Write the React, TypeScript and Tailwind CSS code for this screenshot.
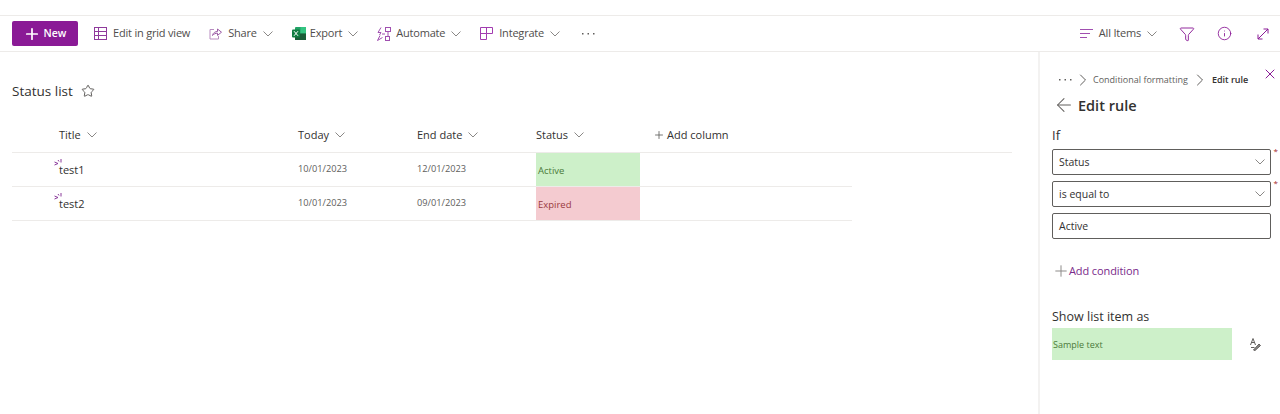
import { Plus, X, ArrowLeft, ChevronRight, Star, Filter, Info } from 'lucide-react';

function Chevron({ className = 'ml-[6px]' }: { className?: string }) {
  return (
    <svg width="10" height="6" viewBox="0 0 10 6" fill="none" stroke="#8a8886" strokeWidth="1" className={className}>
      <path d="M0.5 0.5 L5 5 L9.5 0.5" />
    </svg>
  );
}

function Dots({ color = '#605e5c' }: { color?: string }) {
  return (
    <svg width="13" height="2" viewBox="0 0 13 2" fill={color}>
      <rect x="0" y="0" width="1.5" height="1.5" />
      <rect x="5.5" y="0" width="1.5" height="1.5" />
      <rect x="11" y="0" width="1.5" height="1.5" />
    </svg>
  );
}

function GridIcon() {
  return (
    <svg width="13" height="13" viewBox="0 0 13 13" fill="none" stroke="#8f3a9c" strokeWidth="1">
      <rect x="0.5" y="0.5" width="12" height="12" />
      <path d="M0.5 4.5 H12.5 M0.5 8.5 H12.5 M4.5 0.5 V12.5" />
    </svg>
  );
}

function ShareIcon() {
  return (
    <svg width="13" height="13" viewBox="0 0 13 13" fill="none" stroke="#9a5aa5" strokeWidth="1">
      <path d="M5 2.5 H1 V12 H9.5 V9" stroke="#b88cc0" />
      <path d="M3.5 8.5 C4 5.5 6.5 4.5 8.5 4.5 V2 L12.5 5.2 L8.5 8.4 V6.2 C6.5 6.2 5 6.8 3.5 8.5 Z" />
    </svg>
  );
}

function ExcelIcon() {
  return (
    <svg width="14" height="13" viewBox="0 0 14 13">
      <rect x="3" y="0" width="11" height="13" rx="1" fill="#21a366" />
      <rect x="8.5" y="0" width="5.5" height="6.5" fill="#33c481" />
      <rect x="3" y="6.5" width="11" height="6.5" fill="#185c37" />
      <rect x="0" y="2.5" width="8" height="8" rx="1" fill="#107c41" />
      <path d="M2 4.2 L6 8.8 M6 4.2 L2 8.8" stroke="#ffffff" strokeWidth="1" />
    </svg>
  );
}

function AutomateIcon() {
  return (
    <svg width="14" height="14" viewBox="0 0 14 14" fill="none" stroke="#a04fb0" strokeWidth="1">
      <rect x="8.5" y="0.5" width="5" height="4" />
      <rect x="8.5" y="9.5" width="4" height="4" />
      <path d="M11 4.5 V9.5 M8 7 H5" />
      <path d="M4 0.5 L1 5.5 H4 L2.5 8 M3 8.5 L0.5 13.5 L5.5 10.5" />
    </svg>
  );
}

function IntegrateIcon() {
  return (
    <svg width="13" height="13" viewBox="0 0 13 13" fill="none" stroke="#a23bb0" strokeWidth="1">
      <path d="M0.5 0.5 H12.5 V6.5 H6.5 V12.5 H0.5 Z M0.5 6.5 H6.5 V0.5" />
    </svg>
  );
}

function ToolItem({ icon, label, chevron = true, textClass = 'ml-[6px]' }: { icon: React.ReactNode; label: string; chevron?: boolean; textClass?: string }) {
  return (
    <div className="flex items-center">
      {icon}
      <span className={`${textClass} text-[11px] tracking-[-0.2px] text-[#4f4d4b]`}>{label}</span>
      {chevron && <Chevron />}
    </div>
  );
}

function Header({ label, width }: { label: string; width: string }) {
  return (
    <div className={`flex items-center ${width}`}>
      <span className="text-[11px] font-medium text-[#323130]">{label}</span>
      <Chevron className="ml-[6px]" />
    </div>
  );
}

function Row({ title, today, end, status, cellClass }: { title: string; today: string; end: string; status: string; cellClass: string }) {
  return (
    <div className="flex h-[34px] w-[840px] items-stretch border-b border-[#edebe9]">
      <div className="relative flex w-[286px] items-center pl-[47px] text-[11px] text-[#323130]">
        <svg width="9" height="7" viewBox="0 0 9 7" fill="none" stroke="#8a3a9a" strokeWidth="1" className="absolute left-[42px] top-[6px]">
          <path d="M0.5 3 L4 4.5 L0.5 6 M7 0 V3.5 M4 1 L5 2.5" />
        </svg>
        <span className="mt-[1px]">{title}</span>
      </div>
      <div className="flex w-[119px] items-center pb-[2px] text-[9.25px] text-[#605e5c]">{today}</div>
      <div className="flex w-[119px] items-center pb-[2px] text-[9.25px] text-[#605e5c]">{end}</div>
      <div className={`flex w-[104px] items-center pl-[2px] pt-[2px] text-[9.5px] ${cellClass}`}>{status}</div>
    </div>
  );
}

function SelectBox({ label, required }: { label: string; required?: boolean }) {
  return (
    <div className="relative flex h-[26px] w-[219px] items-center justify-between rounded-[2px] border border-[#605e5c] pl-[6px] pr-[5px] text-[10.5px] text-[#323130]">
      <span className="pt-[1px]">{label}</span>
      <Chevron className="" />
      {required && <span className="absolute right-[-8px] top-[-5px] text-[8px] text-[#a4262c]">*</span>}
    </div>
  );
}

export default function App() {
  return (
    <div className="flex h-[414px] w-[1280px] flex-col overflow-hidden bg-white font-['Open_Sans',sans-serif]">
      <div className="h-[16px] border-b border-[#edebe9]" />
      <div className="flex h-[36px] items-center justify-between border-b border-[#edebe9] pl-[12px] pr-[11px]">
        <div className="flex items-center gap-[19px]">
          <div className="mr-[-3px] flex h-[25px] w-[66px] items-center justify-center rounded-[2px] bg-[#8a1a96] pr-[1px] text-[10.5px] font-semibold text-white">
            <Plus size={18} strokeWidth={2.3} className="mr-[3px]" />
            New
          </div>
          <ToolItem icon={<GridIcon />} label="Edit in grid view" chevron={false} />
          <ToolItem icon={<ShareIcon />} label="Share" />
          <ToolItem icon={<ExcelIcon />} label="Export" textClass="ml-[4px]" />
          <ToolItem icon={<AutomateIcon />} label="Automate" textClass="ml-[5px]" />
          <ToolItem icon={<IntegrateIcon />} label="Integrate" />
          <span className="ml-[3px]">
            <Dots />
          </span>
        </div>
        <div className="flex items-center">
          <div className="flex items-center">
            <svg width="13" height="9" viewBox="0 0 13 9" stroke="#a04fb0" strokeWidth="1">
              <path d="M0 0.5 H13 M0 4.5 H10 M0 8.5 H7" />
            </svg>
            <span className="ml-[6px] text-[11px] tracking-[-0.2px] text-[#4f4d4b]">All Items</span>
            <Chevron className="ml-[6px]" />
          </div>
          <Filter size={16} strokeWidth={1.4} color="#8a1a96" className="ml-[22px]" />
          <Info size={15} strokeWidth={1.4} color="#8a1a96" className="ml-[22px]" />
          <svg width="12" height="12" viewBox="0 0 12 12" fill="none" stroke="#8a1a96" strokeWidth="1" className="ml-[25px]">
            <path d="M1 11 L11 1 M6.5 1 H11 V5.5 M1 6.5 V11 H5.5" />
          </svg>
        </div>
      </div>

      <div className="flex flex-1">
        <div className="w-[1038px] pl-[12px]">
          <div className="mt-[29px] flex items-center">
            <span className="text-[13.5px] font-medium text-[#323130]">Status list</span>
            <Star size={14} strokeWidth={1.7} color="#605e5c" className="ml-[8px]" />
          </div>
          <div className="mt-[17px] flex h-[35px] w-[1000px] items-center border-b border-[#edebe9] pl-[47px]">
            <Header label="Title" width="w-[239px]" />
            <Header label="Today" width="w-[119px]" />
            <Header label="End date" width="w-[119px]" />
            <Header label="Status" width="w-[119px]" />
            <div className="flex items-center text-[11px] font-medium text-[#323130]">
              <Plus size={12} strokeWidth={1.7} color="#605e5c" className="mr-[2px] ml-[-2px]" />
              Add column
            </div>
          </div>
          <Row title="test1" today="10/01/2023" end="12/01/2023" status="Active" cellClass="bg-[#cdf0c9] text-[#4b7a3a]" />
          <Row title="test2" today="10/01/2023" end="09/01/2023" status="Expired" cellClass="bg-[#f4cbd0] text-[#9a3a3f]" />
        </div>

        <div className="relative flex-1 border-l-2 border-[#f3f2f1] pl-[12px]">
          <X size={16} strokeWidth={1.5} color="#8a1a96" className="absolute right-[2px] top-[14px]" />
          <div className="mt-[20px] flex h-[16px] items-center pl-[7px] text-[9px] text-[#605e5c]">
            <Dots />
            <ChevronRight size={20} strokeWidth={1.2} className="ml-[1px]" />
            <span>Conditional formatting</span>
            <ChevronRight size={20} strokeWidth={1.2} className="mx-[2px]" />
            <span className="font-semibold text-[#323130]">Edit rule</span>
          </div>
          <div className="mt-[6px] flex h-[22px] items-center">
            <ArrowLeft size={22} strokeWidth={1.1} color="#605e5c" className="ml-[1px]" />
            <span className="ml-[3px] pt-[1px] text-[14.5px] font-semibold text-[#323130]">Edit rule</span>
          </div>
          <div className="mt-[10px] text-[13px] font-medium leading-[18px] text-[#323130]">If</div>
          <div className="mt-[5px] flex flex-col gap-[6px]">
            <SelectBox label="Status" required />
            <SelectBox label="is equal to" required />
            <div className="flex h-[26px] w-[219px] items-center rounded-[2px] border border-[#605e5c] pl-[6px] pt-[2px] text-[10.5px] text-[#323130]">Active</div>
          </div>
          <div className="mt-[23px] flex h-[18px] items-center text-[11px] tracking-[-0.1px] text-[#7a2a8a]">
            <Plus size={18} strokeWidth={1.3} color="#8a8886" className="mr-[-1px]" />
            <span>Add condition</span>
          </div>
          <div className="mt-[28px] text-[12.5px] font-medium leading-[18px] text-[#323130]">Show list item as</div>
          <div className="mt-[2px] flex items-center">
            <div className="flex h-[32px] w-[180px] items-center bg-[#cdf0c9] pl-[1px] pt-[2px] text-[9px] text-[#4b7a3a]">Sample text</div>
            <svg width="11" height="13" viewBox="0 0 11 13" fill="none" stroke="#605e5c" strokeWidth="1" className="ml-[18px]">
              <path d="M0.5 7 L3 0.5 L5.5 7 M1.5 4.5 H4.5" />
              <path d="M1 9.5 H4.5" />
              <path d="M3.5 12 L9 6 L10.5 7.5 L5 12.5 Z" fill="#8a8886" />
            </svg>
          </div>
        </div>
      </div>
    </div>
  );
}
